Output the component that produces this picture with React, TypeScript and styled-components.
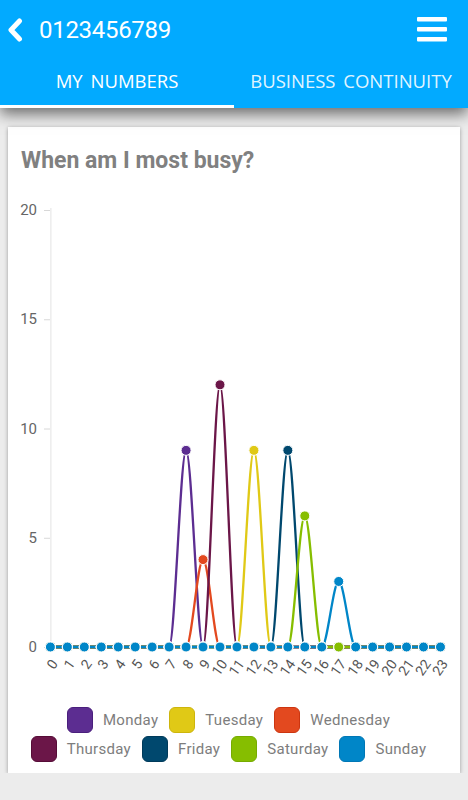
import styled, { createGlobalStyle } from 'styled-components'

const GlobalStyle = createGlobalStyle`
    html, body {
        margin: 0;
        padding: 0;
        background: #ececec;
    }
    body {
        font-family: Roboto, 'Liberation Sans', sans-serif;
    }
`

type Series = {
    name: string
    color: string
    border: string
    values: number[]
}

const zeros = () => Array.from({ length: 24 }, () => 0)
const withPeaks = (peaks: Record<number, number>) => {
    const v = zeros()
    Object.entries(peaks).forEach(([k, n]) => (v[Number(k)] = n))
    return v
}

const series: Series[] = [
    { name: 'Monday', color: '#5c2d91', border: '#4a1f7c', values: withPeaks({ 8: 9 }) },
    { name: 'Tuesday', color: '#e0c916', border: '#cdb50c', values: withPeaks({ 12: 9 }) },
    { name: 'Wednesday', color: '#e3491f', border: '#cc3510', values: withPeaks({ 9: 4 }) },
    { name: 'Thursday', color: '#6b1648', border: '#560c37', values: withPeaks({ 10: 12 }) },
    { name: 'Friday', color: '#00486e', border: '#003a5a', values: withPeaks({ 14: 9 }) },
    { name: 'Saturday', color: '#86be00', border: '#76ab00', values: withPeaks({ 15: 6 }) },
    { name: 'Sunday', color: '#0086c8', border: '#0077b5', values: withPeaks({ 17: 3 }) },
]

const Header = styled.header`
    position: relative;
    z-index: 1;
    background: #02aaff;
    box-shadow: 0 6px 14px rgba(0, 0, 0, 0.55);
`

const TopBar = styled.div`
    height: 60px;
    display: flex;
    align-items: center;
    padding: 0 21px 0 7px;
    color: #fff;
`

const Title = styled.h1`
    margin: 0 0 0 16px;
    flex: 1;
    font-family: Roboto, 'Liberation Sans', sans-serif;
    font-weight: 400;
    font-size: 24px;
    letter-spacing: -0.3px;
`

const IconButton = styled.button`
    display: flex;
    align-items: center;
    justify-content: center;
    padding: 0;
    border: 0;
    background: none;
    color: #fff;
`

const Tabs = styled.nav`
    display: flex;
`

const Tab = styled.div<{ $active?: boolean }>`
    flex: 1;
    height: 48px;
    box-sizing: border-box;
    display: flex;
    align-items: center;
    justify-content: center;
    padding-bottom: 5px;
    border-bottom: 3px solid ${(p) => (p.$active ? '#fff' : 'transparent')};
    font-family: 'Open Sans', 'DejaVu Sans', sans-serif;
    font-size: 18.5px;
    word-spacing: 3px;
    color: ${(p) => (p.$active ? '#fff' : 'rgba(255, 255, 255, 0.9)')};
`

const Main = styled.main`
    padding: 19px 8px 0;
`

const Card = styled.section`
    background: #fff;
    box-shadow: 0 1px 4px rgba(0, 0, 0, 0.35);
    padding: 20px 0 11px;
`

const CardTitle = styled.h2`
    margin: 0;
    padding: 0 13px;
    font-size: 23px;
    line-height: 28px;
    font-weight: 700;
    color: #808080;
`

const ChartSvg = styled.svg`
    display: block;
`

const Legend = styled.div`
    padding-top: 7px;
    display: flex;
    flex-direction: column;
    gap: 3px;
`

const LegendRow = styled.div`
    display: flex;
    justify-content: center;
`

const LegendItem = styled.div`
    display: flex;
    align-items: center;
    gap: 10px;
    padding-right: 11px;
    font-size: 15px;
    letter-spacing: 0.3px;
    color: #7d7d7d;
`

const Swatch = styled.span<{ $color: string; $border: string }>`
    width: 26px;
    height: 26px;
    box-sizing: border-box;
    border-radius: 6px;
    background: ${(p) => p.$color};
    border: 1px solid ${(p) => p.$border};
`

// chart geometry (svg coords, svg sits at x=8, y=175 on the page)
const X0 = 42.4
const DX = 16.96
const Y0 = 472
const UNIT = 21.85
const px = (i: number) => X0 + i * DX
const py = (v: number) => Y0 - v * UNIT

const curve = (values: number[]) =>
    values
        .map((v, i) => {
            if (i === 0) return `M${px(0)},${py(v)}`
            const x1 = px(i - 1) + DX / 3
            const x2 = px(i) - DX / 3
            return `C${x1},${py(values[i - 1])} ${x2},${py(v)} ${px(i)},${py(v)}`
        })
        .join(' ')

const Chart = () => (
    <ChartSvg width={452} height={525} viewBox='0 0 452 525'>
        <line x1={X0 + 0.5} y1={33} x2={X0 + 0.5} y2={Y0} stroke='#e3e3e3' strokeWidth={1} />
        {[0, 5, 10, 15, 20].map((t) => (
            <g key={t}>
                <line x1={36} y1={py(t) + 0.5} x2={42} y2={py(t) + 0.5} stroke='#d8d8d8' />
                <text
                    x={29}
                    y={py(t)}
                    textAnchor='end'
                    dominantBaseline='central'
                    fontFamily='Roboto, sans-serif'
                    fontSize={15}
                    fill='#666'
                >
                    {t}
                </text>
            </g>
        ))}
        {series.map((s) => (
            <path key={s.name} d={curve(s.values)} fill='none' stroke={s.color} strokeWidth={2.3} />
        ))}
        {series.map((s) =>
            s.values.map((v, i) => (
                <circle key={s.name + i} cx={px(i)} cy={py(v)} r={5} fill={s.color} stroke='#fff' strokeWidth={1} />
            ))
        )}
        {Array.from({ length: 24 }, (_, i) => (
            <text
                key={i}
                x={px(i) + 4}
                y={486}
                textAnchor='end'
                dominantBaseline='central'
                fontFamily='Roboto, sans-serif'
                fontSize={14}
                fill='#555'
                transform={`rotate(-55 ${px(i) + 4} 486)`}
            >
                {i}
            </text>
        ))}
    </ChartSvg>
)

export default function App() {
    const rows = [series.slice(0, 3), series.slice(3)]
    return (
        <>
            <GlobalStyle />
            <Header>
                <TopBar>
                    <IconButton aria-label='Back'>
                        <svg width='16' height='24' viewBox='0 0 16 24'>
                            <path
                                d='M12.5 3 L4 12 L12.5 21'
                                fill='none'
                                stroke='#fff'
                                strokeWidth='5'
                                strokeLinecap='round'
                                strokeLinejoin='round'
                            />
                        </svg>
                    </IconButton>
                    <Title>0123456789</Title>
                    <IconButton aria-label='Menu'>
                        <svg width='30' height='26' viewBox='0 0 30 26'>
                            <rect x='0' y='0' width='30' height='4.6' rx='1' fill='#fff' />
                            <rect x='0' y='10' width='30' height='4.6' rx='1' fill='#fff' />
                            <rect x='0' y='20' width='30' height='4.6' rx='1' fill='#fff' />
                        </svg>
                    </IconButton>
                </TopBar>
                <Tabs>
                    <Tab $active>MY NUMBERS</Tab>
                    <Tab>BUSINESS CONTINUITY</Tab>
                </Tabs>
            </Header>
            <Main>
                <Card>
                    <CardTitle>When am I most busy?</CardTitle>
                    <Chart />
                    <Legend>
                        {rows.map((row, r) => (
                            <LegendRow key={r}>
                                {row.map((s) => (
                                    <LegendItem key={s.name}>
                                        <Swatch $color={s.color} $border={s.border} />
                                        {s.name}
                                    </LegendItem>
                                ))}
                            </LegendRow>
                        ))}
                    </Legend>
                </Card>
            </Main>
        </>
    )
}
